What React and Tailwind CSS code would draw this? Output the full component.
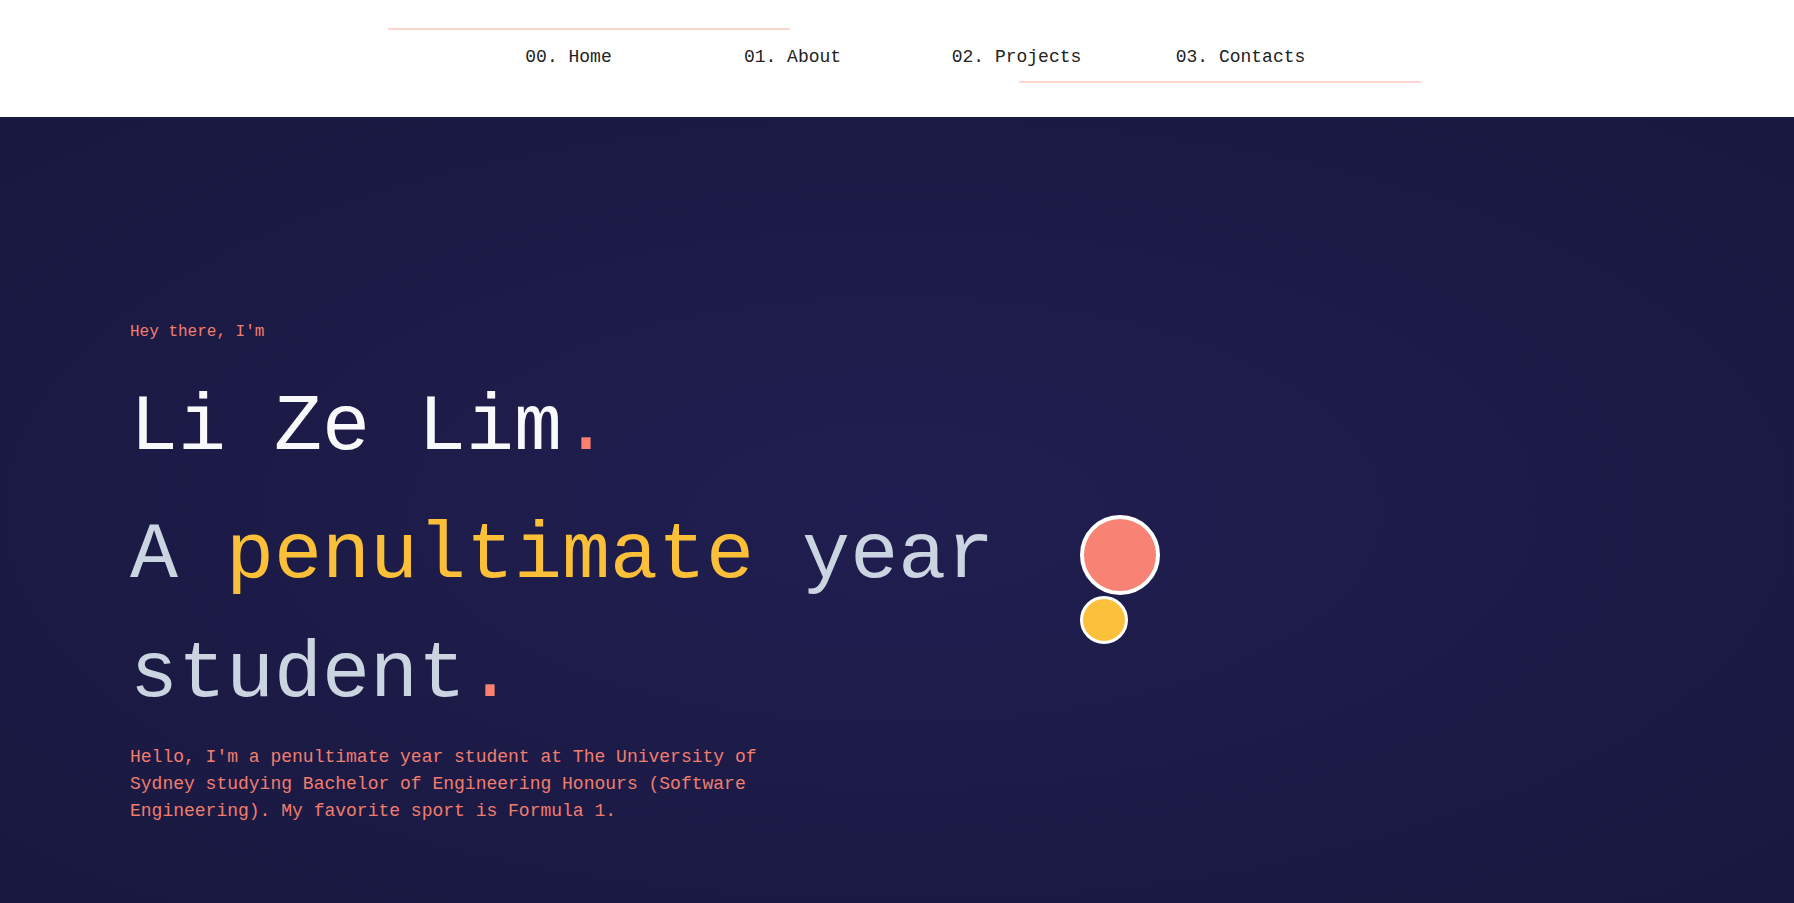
export default function App() {
  const mono = { fontFamily: '"Liberation Mono", "DejaVu Sans Mono", monospace' };
  const items = ["00. Home", "01. About", "02. Projects", "03. Contacts"];
  return (
    <div className="w-full min-h-screen bg-white" style={mono}>
      <header className="h-[117px] bg-white">
        <div className="ml-[388px] w-[1033px] pt-[28px] flex flex-col">
          <div className="h-[2px] w-[402px] bg-[#fcd6cf]" />
          <nav className="mt-[14px] flex justify-center">
            {items.map((t) => (
              <a key={t} className="w-[224px] text-center text-[18px] leading-[27px] text-[#222222]">
                {t}
              </a>
            ))}
          </nav>
          <div className="mt-[10px] self-end h-[2px] w-[402px] bg-[#fcd6cf]" />
        </div>
      </header>
      <section className="min-h-[786px] bg-[radial-gradient(ellipse_at_center,#201e50_0%,#1c1b47_55%,#19183f_100%)] pt-[203px] pl-[130px]">
        <div className="flex items-start">
          <div className="w-[920px] shrink-0">
            <p className="text-[16px] leading-[24px] text-[#f27d6d]">Hey there, I'm</p>
            <h1 className="mt-6 text-[80px] leading-[120px] text-[#f8f9fb]">
              Li Ze Lim<span className="text-[#fa8072]">.</span>
            </h1>
            <h2 className="mt-2 text-[80px] leading-[119px] text-[#cbd5e1]">
              A <span className="text-[#fbbf38]">penultimate</span> year student
              <span className="text-[#fa8072]">.</span>
            </h2>
            <p className="mt-[10px] w-[640px] text-[18px] leading-[27px] text-[#f27d6d]">
              Hello, I'm a penultimate year student at The University of Sydney studying Bachelor of Engineering Honours (Software Engineering). My favorite sport is Formula 1.
            </p>
          </div>
          <div className="mt-[195px] ml-[30px] flex flex-col items-start">
            <div className="h-[80px] w-[80px] rounded-full border-4 border-white bg-[#f88375]" />
            <div className="mt-[1px] h-[48px] w-[48px] rounded-full border-[3px] border-white bg-[#fbc13b]" />
          </div>
        </div>
      </section>
    </div>
  );
}
